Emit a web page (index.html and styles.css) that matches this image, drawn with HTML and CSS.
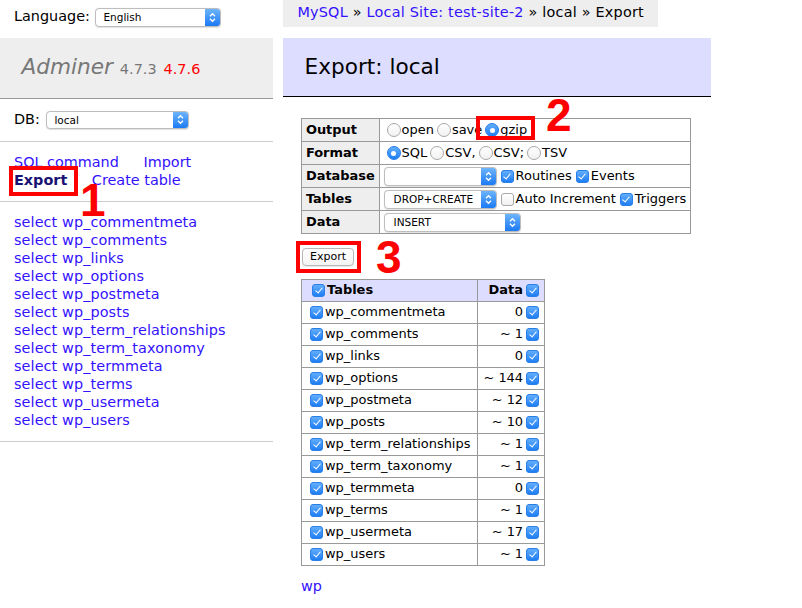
FILE: index.html
```html
<!DOCTYPE html>
<html lang="en">
<head>
<meta charset="utf-8">
<title>Export: local - Adminer</title>
<link rel="stylesheet" href="styles.css">
</head>
<body>
<div class="page">
  <div class="menu">
    <div class="lang">Language: <span class="sel sel-lang"><span class="sel-text">English</span><span class="sel-btn"><svg width="7" height="11" viewBox="0 0 7 11"><path d="M1 4.2 L3.5 1.7 L6 4.2 M1 6.8 L3.5 9.3 L6 6.8" fill="none" stroke="#fff" stroke-width="1.3"/></svg></span></span></div>
    <h1><a class="h1" href="#">Adminer</a> <span class="version">4.7.3</span> <a class="newver" href="#">4.7.6</a></h1>
    <p class="dbs">DB: <span class="sel sel-db"><span class="sel-text">local</span><span class="sel-btn"><svg width="7" height="11" viewBox="0 0 7 11"><path d="M1 4.2 L3.5 1.7 L6 4.2 M1 6.8 L3.5 9.3 L6 6.8" fill="none" stroke="#fff" stroke-width="1.3"/></svg></span></span></p>
    <p class="links"><a href="#">SQL command</a> <a href="#">Import</a> <a href="#" class="active">Export</a> <a href="#">Create table</a></p>
    <ul class="tables">
      <li><a href="#">select</a> <a href="#">wp_commentmeta</a></li>
      <li><a href="#">select</a> <a href="#">wp_comments</a></li>
      <li><a href="#">select</a> <a href="#">wp_links</a></li>
      <li><a href="#">select</a> <a href="#">wp_options</a></li>
      <li><a href="#">select</a> <a href="#">wp_postmeta</a></li>
      <li><a href="#">select</a> <a href="#">wp_posts</a></li>
      <li><a href="#">select</a> <a href="#">wp_term_relationships</a></li>
      <li><a href="#">select</a> <a href="#">wp_term_taxonomy</a></li>
      <li><a href="#">select</a> <a href="#">wp_termmeta</a></li>
      <li><a href="#">select</a> <a href="#">wp_terms</a></li>
      <li><a href="#">select</a> <a href="#">wp_usermeta</a></li>
      <li><a href="#">select</a> <a href="#">wp_users</a></li>
    </ul>
  </div>
  <div class="content">
    <div class="breadcrumb"><a href="#">MySQL</a> » <a href="#">Local Site: test-site-2</a> » local » Export</div>
    <h2>Export: local</h2>
    <form class="dump">
      <table class="opts">
        <colgroup><col class="opts-c1"><col></colgroup>
        <tr><th>Output</th><td><div class="c"><span class="rd"></span>open<span class="rd"></span>save<span class="rd on"></span>gzip</div></td></tr>
        <tr><th>Format</th><td><div class="c"><span class="rd on"></span>SQL<span class="rd"></span>CSV,<span class="rd"></span>CSV;<span class="rd"></span>TSV</div></td></tr>
        <tr><th>Database</th><td><div class="c"><span class="sel sel-sm"><span class="sel-text"></span><span class="sel-btn"><svg width="7" height="11" viewBox="0 0 7 11"><path d="M1 4.2 L3.5 1.7 L6 4.2 M1 6.8 L3.5 9.3 L6 6.8" fill="none" stroke="#fff" stroke-width="1.3"/></svg></span></span><span class="cb"></span>Routines<span class="cb"></span>Events</div></td></tr>
        <tr><th>Tables</th><td><div class="c"><span class="sel sel-sm"><span class="sel-text">DROP+CREATE</span><span class="sel-btn"><svg width="7" height="11" viewBox="0 0 7 11"><path d="M1 4.2 L3.5 1.7 L6 4.2 M1 6.8 L3.5 9.3 L6 6.8" fill="none" stroke="#fff" stroke-width="1.3"/></svg></span></span><span class="cb off"></span>Auto Increment<span class="cb"></span>Triggers</div></td></tr>
        <tr><th>Data</th><td><div class="c"><span class="sel sel-md"><span class="sel-text">INSERT</span><span class="sel-btn"><svg width="7" height="11" viewBox="0 0 7 11"><path d="M1 4.2 L3.5 1.7 L6 4.2 M1 6.8 L3.5 9.3 L6 6.8" fill="none" stroke="#fff" stroke-width="1.3"/></svg></span></span></div></td></tr>
      </table>
      <p class="submit"><span class="btn">Export</span></p>
      <table class="tlist">
        <colgroup><col class="tl-c1"><col></colgroup>
        <thead>
          <tr><th class="th-l"><div class="c"><span class="cb"></span>Tables</div></th><th class="th-r"><div class="c cr">Data<span class="cb"></span></div></th></tr>
        </thead>
        <tbody>
          <tr><td><div class="c"><span class="cb"></span>wp_commentmeta</div></td><td><div class="c cr">0<span class="cb"></span></div></td></tr>
          <tr><td><div class="c"><span class="cb"></span>wp_comments</div></td><td><div class="c cr">~ 1<span class="cb"></span></div></td></tr>
          <tr><td><div class="c"><span class="cb"></span>wp_links</div></td><td><div class="c cr">0<span class="cb"></span></div></td></tr>
          <tr><td><div class="c"><span class="cb"></span>wp_options</div></td><td><div class="c cr">~ 144<span class="cb"></span></div></td></tr>
          <tr><td><div class="c"><span class="cb"></span>wp_postmeta</div></td><td><div class="c cr">~ 12<span class="cb"></span></div></td></tr>
          <tr><td><div class="c"><span class="cb"></span>wp_posts</div></td><td><div class="c cr">~ 10<span class="cb"></span></div></td></tr>
          <tr><td><div class="c"><span class="cb"></span>wp_term_relationships</div></td><td><div class="c cr">~ 1<span class="cb"></span></div></td></tr>
          <tr><td><div class="c"><span class="cb"></span>wp_term_taxonomy</div></td><td><div class="c cr">~ 1<span class="cb"></span></div></td></tr>
          <tr><td><div class="c"><span class="cb"></span>wp_termmeta</div></td><td><div class="c cr">0<span class="cb"></span></div></td></tr>
          <tr><td><div class="c"><span class="cb"></span>wp_terms</div></td><td><div class="c cr">~ 1<span class="cb"></span></div></td></tr>
          <tr><td><div class="c"><span class="cb"></span>wp_usermeta</div></td><td><div class="c cr">~ 17<span class="cb"></span></div></td></tr>
          <tr><td><div class="c"><span class="cb"></span>wp_users</div></td><td><div class="c cr">~ 1<span class="cb"></span></div></td></tr>
        </tbody>
      </table>
      <p class="dblink"><a href="#">wp</a></p>
    </form>
  </div>

  <div class="mark box1"></div>
  <div class="num num1">1</div>
  <div class="mark box2"></div>
  <div class="num num2">2</div>
  <div class="mark box3"></div>
  <div class="num num3">3</div>
</div>
</body>
</html>
```
FILE: styles.css
```css
html, body {
  margin: 0;
  background: #fff;
}
body {
  font: 14.4px/1.25 "DejaVu Sans", Verdana, sans-serif;
  color: #000;
}
a {
  color: #3311ff;
  text-decoration: none;
}
.page {
  display: flex;
  align-items: flex-start;
  position: relative;
  min-height: 608px;
}

/* ---------- menu ---------- */
.menu {
  width: 273px;
  flex: none;
}
.lang {
  height: 38px;
  box-sizing: border-box;
  padding: 3px 14px 0;
  line-height: 26px;
  white-space: nowrap;
}
.menu h1 {
  margin: 0;
  padding: 17px 21.6px;
  font-size: 21.6px;
  line-height: 24px;
  font-weight: normal;
  color: #777;
  background: #eee;
  border-bottom: 1px solid #999;
  white-space: nowrap;
}
.h1 {
  color: #777;
  font-style: italic;
}
.version {
  font-size: 67%;
  color: #777;
}
.newver {
  font-size: 67%;
  color: #f00;
}
.dbs, .links, .tables {
  margin: 0;
  padding: 10.5px 14px 12.5px;
  border-bottom: 1px solid #ccc;
  line-height: 18px;
}
.links a {
  margin-right: 20px;
  white-space: nowrap;
}
.links a.active {
  font-weight: bold;
  color: #1a1273;
}
.tables {
  list-style: none;
  white-space: nowrap;
  letter-spacing: 0.1px;
}

/* ---------- select ---------- */
.sel {
  display: inline-flex;
  box-sizing: border-box;
  height: 19px;
  border: 1px solid #bdbdbd;
  border-radius: 4px;
  background: #fff;
  vertical-align: middle;
  overflow: hidden;
  font: 10.5px/17px "DejaVu Sans", sans-serif;
  letter-spacing: 0;
  color: #000;
  box-shadow: 0 0.5px 1px rgba(0,0,0,0.12);
}
.sel-text {
  flex: 1;
  padding-left: 7px;
  white-space: nowrap;
}
.sel-btn {
  width: 15px;
  flex: none;
  display: flex;
  align-items: center;
  justify-content: center;
  background: linear-gradient(#6db4fb, #1b7af4);
}
.sel-lang {
  width: 126px;
  margin-left: 1px;
}
.sel-db {
  width: 143px;
  height: 18px;
  margin-left: 2px;
}
.sel-sm {
  width: 113px;
}
.sel-md {
  width: 137px;
}
.sel-sm .sel-text, .sel-md .sel-text {
  padding-left: 9px;
}

/* ---------- content ---------- */
.content {
  margin-left: 10px;
}
.breadcrumb {
  width: fit-content;
  height: 27px;
  line-height: 25px;
  padding: 0 14.4px;
  background: #eee;
  white-space: nowrap;
  letter-spacing: 0.22px;
}
.content h2 {
  margin: 11px 0 21px;
  padding: 17px 21.6px;
  font-size: 21.6px;
  line-height: 24px;
  font-weight: normal;
  background: #ddf;
  border-bottom: 1px solid #000;
}
.dump {
  margin: 0;
  padding-left: 18px;
}
table {
  border-collapse: collapse;
  font-size: 12.96px;
  margin: 0 20px 0 0;
}
th, td {
  border: 1px solid #999;
  padding: 2px 3.9px;
  vertical-align: middle;
  white-space: nowrap;
}
th {
  background: #eee;
  text-align: left;
  line-height: 18px;
}
.c {
  display: flex;
  align-items: center;
  height: 18px;
}
.opts {
  width: 390px;
}
.opts-c1 {
  width: 77px;
}

/* radio */
.rd {
  display: inline-flex;
  align-items: center;
  justify-content: center;
  box-sizing: border-box;
  width: 14px;
  height: 14px;
  margin: 0 1px 0 3px;
  border-radius: 50%;
  border: 1px solid #a8a8a8;
  background: linear-gradient(#fff, #f1f1f1);
  flex: none;
}
.rd.on {
  border-color: #2b7fe9;
  background: linear-gradient(#62aefb, #1f7ef5);
}
.rd.on::after {
  content: "";
  width: 5px;
  height: 5px;
  border-radius: 50%;
  background: #fff;
}

/* checkbox */
.cb {
  position: relative;
  display: inline-block;
  box-sizing: border-box;
  width: 13px;
  height: 13px;
  margin: 0 2px 0 4px;
  border-radius: 3px;
  border: 1px solid #2b7fe9;
  background: linear-gradient(#62aefb, #1f7ef5);
  flex: none;
}
.cb::after {
  content: "";
  position: absolute;
  left: 3.6px;
  top: 1.2px;
  width: 3px;
  height: 6px;
  border: solid #fff;
  border-width: 0 1.7px 1.7px 0;
  transform: rotate(40deg);
}
.cb.off {
  border-color: #a8a8a8;
  background: linear-gradient(#fff, #f1f1f1);
}
.cb.off::after {
  display: none;
}

/* button */
.submit {
  margin: 11.5px 20px 0 0;
  height: 22px;
  display: flex;
  align-items: center;
}
.btn {
  display: inline-block;
  box-sizing: border-box;
  height: 18px;
  padding: 0 7px;
  margin-left: 1px;
  font: 11px/16px "DejaVu Sans", sans-serif;
  border: 1px solid #b8b8b8;
  border-radius: 4px;
  background: linear-gradient(#fff, #f3f3f3);
  box-shadow: 0 0.5px 1px rgba(0,0,0,0.1);
}

/* tables list */
.tlist {
  margin-top: 11px;
  width: 244px;
}
.tl-c1 {
  width: 176px;
}
.tlist thead th {
  background: #ddf;
  padding: 2px 4px;
}
.tlist td {
  padding: 2px 3.9px 2px 4px;
}
.tlist .c {
  height: 17px;
}
.tlist .cb {
  margin: 0 2px 0 4px;
}
.th-l .cb {
  margin-left: 6px;
}
.cr {
  justify-content: flex-end;
}
.cr .cb {
  margin: 0 1px 0 3px;
}
.dblink {
  margin: 11.5px 20px 0 0;
  line-height: 18px;
}

/* ---------- annotations ---------- */
.mark {
  position: absolute;
  box-sizing: border-box;
  border: 4px solid #f00;
}
.box1 { left: 9px; top: 166px; width: 69px; height: 30px; }
.box2 { left: 476px; top: 116px; width: 59px; height: 24px; }
.box3 { left: 296px; top: 241px; width: 65px; height: 32px; }
.num {
  position: absolute;
  font: bold 46px/46px "Liberation Sans", Arial, sans-serif;
  color: #f00;
}
.num1 { left: 80px; top: 177px; }
.num2 { left: 546px; top: 92px; }
.num3 { left: 376px; top: 234px; }
```
